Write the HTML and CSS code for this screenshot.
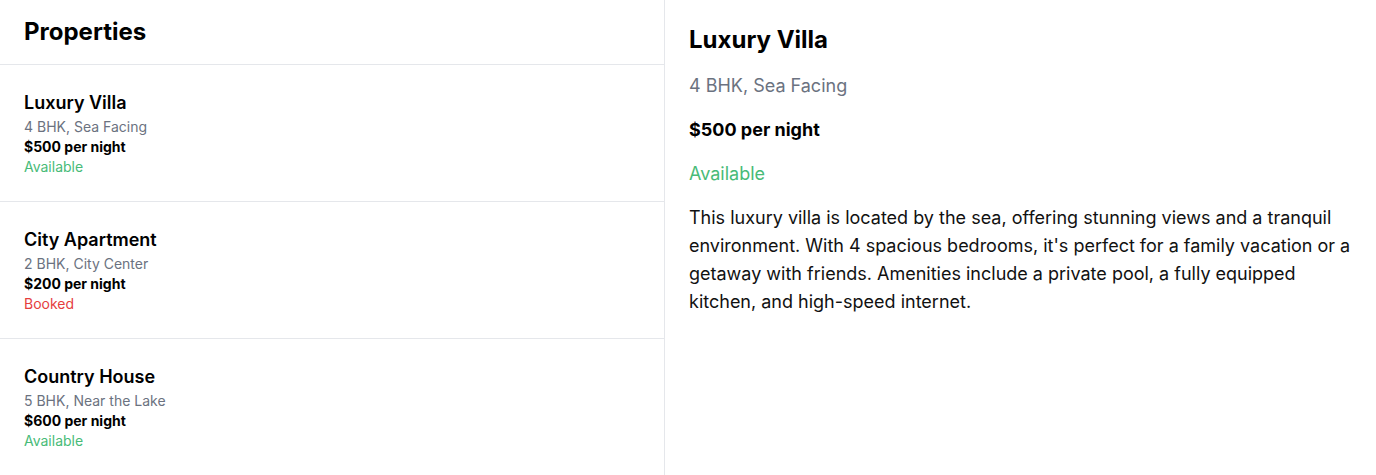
FILE: index.html
```html
<!DOCTYPE html>
<html>
<head>
<meta charset="utf-8">
<link rel="stylesheet" href="styles.css">
</head>
<body>
<div class="app">
  <aside class="list">
    <h1 class="list-title">Properties</h1>
    <div class="item">
      <div class="item-name">Luxury Villa</div>
      <div class="item-sub">4 BHK, Sea Facing</div>
      <div class="item-price">$500 per night</div>
      <div class="item-status ok">Available</div>
    </div>
    <div class="item">
      <div class="item-name">City Apartment</div>
      <div class="item-sub">2 BHK, City Center</div>
      <div class="item-price">$200 per night</div>
      <div class="item-status bad">Booked</div>
    </div>
    <div class="item">
      <div class="item-name">Country House</div>
      <div class="item-sub">5 BHK, Near the Lake</div>
      <div class="item-price">$600 per night</div>
      <div class="item-status ok">Available</div>
    </div>
  </aside>
  <main class="detail">
    <h2 class="d-title">Luxury Villa</h2>
    <p class="d-sub">4 BHK, Sea Facing</p>
    <p class="d-price">$500 per night</p>
    <p class="d-status ok">Available</p>
    <p class="d-desc">This luxury villa is located by the sea, offering stunning views and a tranquil environment. With 4 spacious bedrooms, it's perfect for a family vacation or a getaway with friends. Amenities include a private pool, a fully equipped kitchen, and high-speed internet.</p>
  </main>
</div>
</body>
</html>
```
FILE: styles.css
```css
* { box-sizing: border-box; }
html, body { margin: 0; padding: 0; background: #fff; }
body {
  font-family: Inter, "Noto Sans", sans-serif;
  color: #000;
  height: 475px;
  overflow: hidden;
}
.app { display: flex; height: 100%; }
.list {
  width: 665px;
  flex: none;
  border-right: 1px solid #e5e7eb;
}
.list-title {
  margin: 0;
  padding: 16px 24px;
  font-size: 24px;
  line-height: 32px;
  font-weight: 700;
  border-bottom: 1px solid #e5e7eb;
}
.item {
  padding: 24px;
  border-bottom: 1px solid #e5e7eb;
}
.item-name { font-size: 18px; line-height: 28px; font-weight: 600; }
.item-sub { font-size: 14px; line-height: 20px; color: #6b7280; }
.item-price { font-size: 14px; line-height: 20px; font-weight: 700; }
.item-status { font-size: 14px; line-height: 20px; }
.ok { color: #48bb78; }
.bad { color: #e53e3e; }
.detail { flex: 1; padding: 24px; }
.detail p, .detail h2 { margin: 0; }
.d-title { font-size: 24px; line-height: 32px; font-weight: 700; }
.d-sub { margin-top: 16px !important; font-size: 18px; line-height: 28px; color: #6b7280; }
.d-price { margin-top: 16px !important; font-size: 18px; line-height: 28px; font-weight: 700; }
.d-status { margin-top: 16px !important; font-size: 18px; line-height: 28px; }
.d-desc { margin-top: 16px !important; font-size: 18px; line-height: 28px; color: #111; }
```
